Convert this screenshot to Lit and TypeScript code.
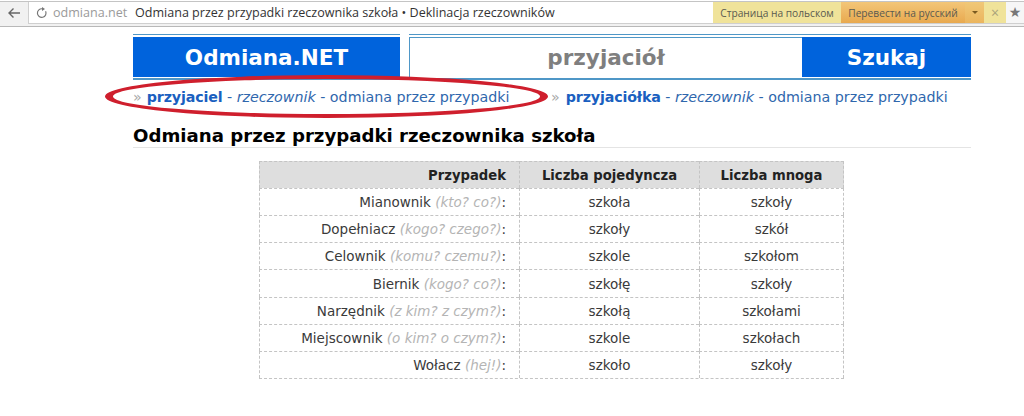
import { LitElement, html, css, svg } from "lit";
import { customElement } from "lit/decorators.js";

const rows: [string, string, string, string][] = [
  ["Mianownik", "(kto? co?)", "szkoła", "szkoły"],
  ["Dopełniacz", "(kogo? czego?)", "szkoły", "szkół"],
  ["Celownik", "(komu? czemu?)", "szkole", "szkołom"],
  ["Biernik", "(kogo? co?)", "szkołę", "szkoły"],
  ["Narzędnik", "(z kim? z czym?)", "szkołą", "szkołami"],
  ["Miejscownik", "(o kim? o czym?)", "szkole", "szkołach"],
  ["Wołacz", "(hej!)", "szkoło", "szkoły"],
];

@customElement("app-root")
export class AppRoot extends LitElement {
  static styles = css`
    :host {
      display: block;
      position: relative;
      width: 1024px;
      height: 416px;
      overflow: hidden;
      background: #fff;
      font-family: "DejaVu Sans", Verdana, sans-serif;
      color: #333;
    }
    .chrome {
      height: 24px;
      margin-top: 1px;
      border-top: 1px solid #c4c4c4;
      border-bottom: 1px solid #b8b8b8;
      background: #f1f1f1;
      display: flex;
      align-items: flex-start;
      box-sizing: content-box;
    }
    .back { width: 28px; height: 21px; display: flex; justify-content: center; align-items: center; flex: none; }
    .bar {
      flex: 1;
      height: 22px;
      background: #fff;
      border: 1px solid #cfcfcf;
      border-top: none;
      border-right: none;
      box-sizing: border-box;
      display: flex;
      align-items: center;
      font-family: "Open Sans", "Noto Sans", sans-serif;
      font-size: 12.55px;
      color: #333;
      white-space: nowrap;
    }
    .reload { margin-left: 7px; width: 12px; height: 12px; flex: none; }
    .host { color: #9a9a9a; margin-left: 5px; width: 82px; flex: none; }
    .title { flex: 1; }
    .tr { display: flex; height: 21px; font-size: 10.2px; color: #5a5a50; align-items: center; }
    .tr1 { width: 128px; height: 100%; background: #f0e39a; display: flex; align-items: center; justify-content: center; }
    .tr2 { width: 124px; height: 100%; background: linear-gradient(#f3c678, #e8a94f); display: flex; align-items: center; justify-content: center; }
    .tr3 { width: 19px; height: 100%; background: linear-gradient(#f0c878, #ebb55e); display: flex; align-items: center; justify-content: center; }
    .caret { width: 0; height: 0; border-left: 3px solid transparent; border-right: 3px solid transparent; border-top: 3px solid #7a5a20; }
    .tr4 { width: 22px; height: 100%; background: #f0e39a; color: #a9a27a; display: flex; align-items: center; justify-content: center; font-size: 14px; }
    .star { width: 18px; flex: none; color: #777; font-size: 14px; text-align: center; font-family: "DejaVu Sans"; background: #f6f6f6; line-height: 21px; }

    .page { width: 838px; margin-left: 133px; }
    .head {
      display: flex;
      margin-top: 7px;
      height: 46px;
    }
    .logo {
      width: 267px;
      flex: none;
      margin-right: 9px;
      border-top: 1px solid #4f97c7;
      border-bottom: 2px solid #4f97c7;
      box-sizing: border-box;
      display: flex;
      padding: 2px 0 1px;
    }
    .logo span, .go {
      flex: 1;
      background: #0063dc;
      color: #fff;
      font-weight: bold;
      font-size: 21.5px;
      display: flex;
      align-items: center;
      justify-content: center;
    }
    .search {
      flex: 1;
      display: flex;
      border-top: 1px solid #4f97c7;
      border-bottom: 2px solid #4f97c7;
      box-sizing: border-box;
      padding: 2px 0 1px;
    }
    .input {
      flex: 1;
      border: 1px solid #4f97c7;
      border-right: none;
      border-bottom: none;
      color: #7f7f7f;
      font-weight: bold;
      font-size: 21.5px;
      display: flex;
      align-items: center;
      justify-content: center;
    }
    .go { flex: none; width: 169px; }
    .links {
      display: flex;
      height: 34px;
      align-items: center;
      font-size: 14.25px;
      color: #2f67ad;
      white-space: nowrap;
    }
    .lk { flex: none; }
    .lk.a { width: 418px; }
    .lk i { font-style: italic; }
    .raquo { color: #a8a8a8; margin-right: 5px; }
    .lk.b .raquo { margin-right: 6px; }
    .lk b { color: #1a5fc0; letter-spacing: -0.15px; }
    h1 {
      margin: 0;
      font-size: 18.15px;
      line-height: 21px;
      padding: 11px 0 1px;
      color: #000;
      border-bottom: 1px solid #e4e4e4;
      font-weight: bold;
    }
    .twrap { display: flex; justify-content: center; margin-top: 13px; }
    .tbl {
      margin-left: -1px;
      display: grid;
      grid-template-columns: 260px 180px 145px;
      font-size: 13.5px;
      border-bottom: 1px dashed #c4c4c4;
      color: #3a3a3a;
    }
    .c {
      height: 27.17px;
      box-sizing: border-box;
      border-top: 1px dashed #c4c4c4;
      border-left: 1px dashed #c4c4c4;
      display: flex;
      align-items: center;
      justify-content: center;
      white-space: pre;
    }
    .c.l { justify-content: flex-end; padding-right: 13px; }
    .c.r { border-right: 1px dashed #c4c4c4; }
    .c.h { height: 27px; background: #dedede; font-size: 13.2px; font-weight: bold; color: #222; }
    .c em { color: #b4b4b4; font-style: italic; }
    .ellipse { position: absolute; left: 0; top: 0; pointer-events: none; }
  `;

  render() {
    return html`
      <div class="chrome">
        <div class="back">
          <svg width="14" height="12" viewBox="0 0 14 12"><path d="M13 6H2M6.5 1.5 2 6l4.5 4.5" fill="none" stroke="#666" stroke-width="1.4"/></svg>
        </div>
        <div class="bar">
          <svg class="reload" viewBox="0 0 12 12"><path d="M9.6 4.2A4.3 4.3 0 1 1 6.4 1.8" fill="none" stroke="#777" stroke-width="1.2"/><path d="M6 0l3 2-3 2z" fill="#777"/></svg>
          <span class="host">odmiana.net</span>
          <span class="title">Odmiana przez przypadki rzeczownika szkoła • Deklinacja rzeczowników</span>
          <div class="tr">
            <div class="tr1">Страница на польском</div>
            <div class="tr2">Перевести на русский</div>
            <div class="tr3"><span class="caret"></span></div>
            <div class="tr4">×</div>
          </div>
          <span class="star">★</span>
        </div>
      </div>
      <div class="page">
        <div class="head">
          <div class="logo"><span>Odmiana.NET</span></div>
          <div class="search">
            <div class="input">przyjaciół</div>
            <div class="go">Szukaj</div>
          </div>
        </div>
        <div class="links">
          <div class="lk a"><span class="raquo">»</span><b>przyjaciel</b> - <i>rzeczownik</i> - odmiana przez przypadki</div>
          <div class="lk b"><span class="raquo">»</span><b>przyjaciółka</b> - <i>rzeczownik</i> - odmiana przez przypadki</div>
        </div>
        <h1>Odmiana przez przypadki rzeczownika szkoła</h1>
        <div class="twrap">
          <div class="tbl">
            <div class="c h l">Przypadek</div>
            <div class="c h">Liczba pojedyncza</div>
            <div class="c h r">Liczba mnoga</div>
            ${rows.map(
              (r) => html`
                <div class="c l">${r[0]} <em>${r[1]}</em>:</div>
                <div class="c">${r[2]}</div>
                <div class="c r">${r[3]}</div>
              `
            )}
          </div>
        </div>
      </div>
      <svg class="ellipse" width="1024" height="416">
        ${svg`<path fill-rule="evenodd" fill="#cf1f2d" d="M105 96.5a221.5 21.5 0 1 0 443 0a221.5 21.5 0 1 0 -443 0ZM113 96.5a213.5 17.5 0 1 0 427 0a213.5 17.5 0 1 0 -427 0Z"/>`}
      </svg>
    `;
  }
}
